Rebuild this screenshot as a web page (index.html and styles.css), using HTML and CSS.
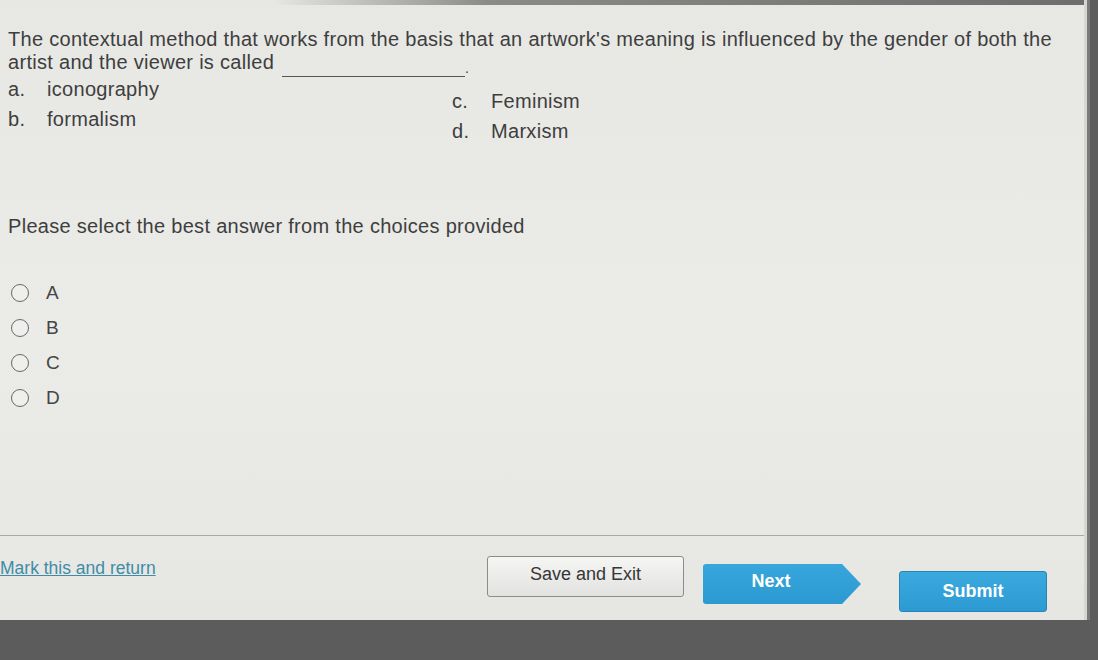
FILE: index.html
```html
<!DOCTYPE html>
<html>
<head>
<meta charset="utf-8">
<link rel="stylesheet" href="styles.css">
</head>
<body>
<div class="panel">
  <div class="topbar"></div>
  <div class="content">
    <div class="question">
      <p class="stem">The contextual method that works from the basis that an artwork's meaning is influenced by the gender of both the<br>artist and the viewer is called <span class="blank"></span><span class="dot">.</span></p>
      <div class="choices">
        <div class="col col-left">
          <div class="choice"><span class="lt">a.</span>iconography</div>
          <div class="choice"><span class="lt">b.</span>formalism</div>
        </div>
        <div class="col col-right">
          <div class="choice"><span class="lt">c.</span>Feminism</div>
          <div class="choice"><span class="lt">d.</span>Marxism</div>
        </div>
      </div>
    </div>
    <p class="prompt">Please select the best answer from the choices provided</p>
    <div class="radios">
      <label class="radio"><span class="circle"></span>A</label>
      <label class="radio"><span class="circle"></span>B</label>
      <label class="radio"><span class="circle"></span>C</label>
      <label class="radio"><span class="circle"></span>D</label>
    </div>
  </div>
  <div class="footer">
    <a class="mark" href="#">Mark this and return</a>
    <div class="buttons">
      <button class="btn save">Save and Exit</button>
      <button class="btn next">Next</button>
      <button class="btn submit">Submit</button>
    </div>
  </div>
</div>
</body>
</html>
```

FILE: styles.css
```css
html, body {
  margin: 0;
  padding: 0;
}
body {
  width: 1098px;
  height: 660px;
  background: #5c5c5c;
  font-family: "Liberation Sans", Arial, sans-serif;
  color: #3e3e3e;
  overflow: hidden;
}
.panel {
  width: 1084px;
  height: 620px;
  background: linear-gradient(180deg, #e7e7e4 0%, #ebebe8 55%, #e6e6e3 100%);
  box-shadow: 3px 0 0 #d6d6d3, 6px 0 0 #7a7a7a;
  display: flex;
  flex-direction: column;
}
.topbar {
  height: 5px;
  background: linear-gradient(90deg, #e7e7e4 0%, #e7e7e4 25%, #8a8a88 45%, #6e6e6e 100%);
}
.content {
  padding: 23px 0 0 8px;
  flex: none;
  height: 507px;
  border-bottom: 1px solid #a8a9a7;
}
.stem {
  margin: 0;
  font-size: 20px;
  letter-spacing: 0.3px;
  line-height: 23px;
  white-space: nowrap;
}
.blank {
  display: inline-block;
  width: 183px;
  border-bottom: 1px solid #555;
  margin-left: 2px;
  vertical-align: -8px;
}
.dot {
  position: relative;
  top: 4px;
  font-size: 14px;
}
.choices {
  display: flex;
  font-size: 20px;
  letter-spacing: 0.3px;
}
.col-left {
  width: 444px;
  margin-top: -3px;
}
.col-right {
  padding-top: 9px;
}
.choice {
  line-height: 30px;
}
.lt {
  display: inline-block;
  width: 39px;
}
.prompt {
  margin: 68px 0 0 0;
  font-size: 20px;
  letter-spacing: 0.3px;
  line-height: 24px;
}
.radios {
  margin-top: 43px;
  padding-left: 3px;
  display: flex;
  flex-direction: column;
  gap: 11px;
}
.radio {
  display: flex;
  align-items: center;
  gap: 17px;
  font-size: 19px;
  height: 24px;
  color: #454545;
}
.circle {
  width: 16px;
  height: 16px;
  border: 1.6px solid #686868;
  border-radius: 50%;
  background: #efefed;
}
.footer {
  flex: 1;
  display: flex;
  align-items: flex-start;
}
.mark {
  margin-top: 22px;
  font-size: 17.5px;
  color: #3f8ca6;
  text-decoration: underline;
  width: 487px;
}
.buttons {
  display: flex;
  align-items: flex-start;
}
.btn {
  font-family: "Liberation Sans", Arial, sans-serif;
  border-radius: 3px;
  cursor: pointer;
  padding: 0;
}
.save {
  margin-top: 20px;
  width: 197px;
  height: 41px;
  font-size: 18px;
  background: linear-gradient(180deg, #f5f5f4 0%, #e2e2e0 100%);
  border: 1px solid #8c8c8a;
  color: #363636;
  padding-bottom: 4px;
}
.next {
  margin-top: 28px;
  margin-left: 19px;
  width: 158px;
  height: 40px;
  border: none;
  color: #fff;
  font-size: 18px;
  font-weight: bold;
  background: linear-gradient(180deg, #36a6dc 0%, #2c9ad2 100%);
  clip-path: polygon(0 0, 88% 0, 100% 50%, 88% 100%, 0 100%);
  padding-right: 22px;
  padding-bottom: 6px;
}
.submit {
  margin-top: 35px;
  margin-left: 38px;
  width: 148px;
  height: 41px;
  border: 1px solid #2784b4;
  color: #fff;
  font-size: 18px;
  font-weight: bold;
  background: linear-gradient(180deg, #3aa9de 0%, #2d9bd3 100%);
}
```
